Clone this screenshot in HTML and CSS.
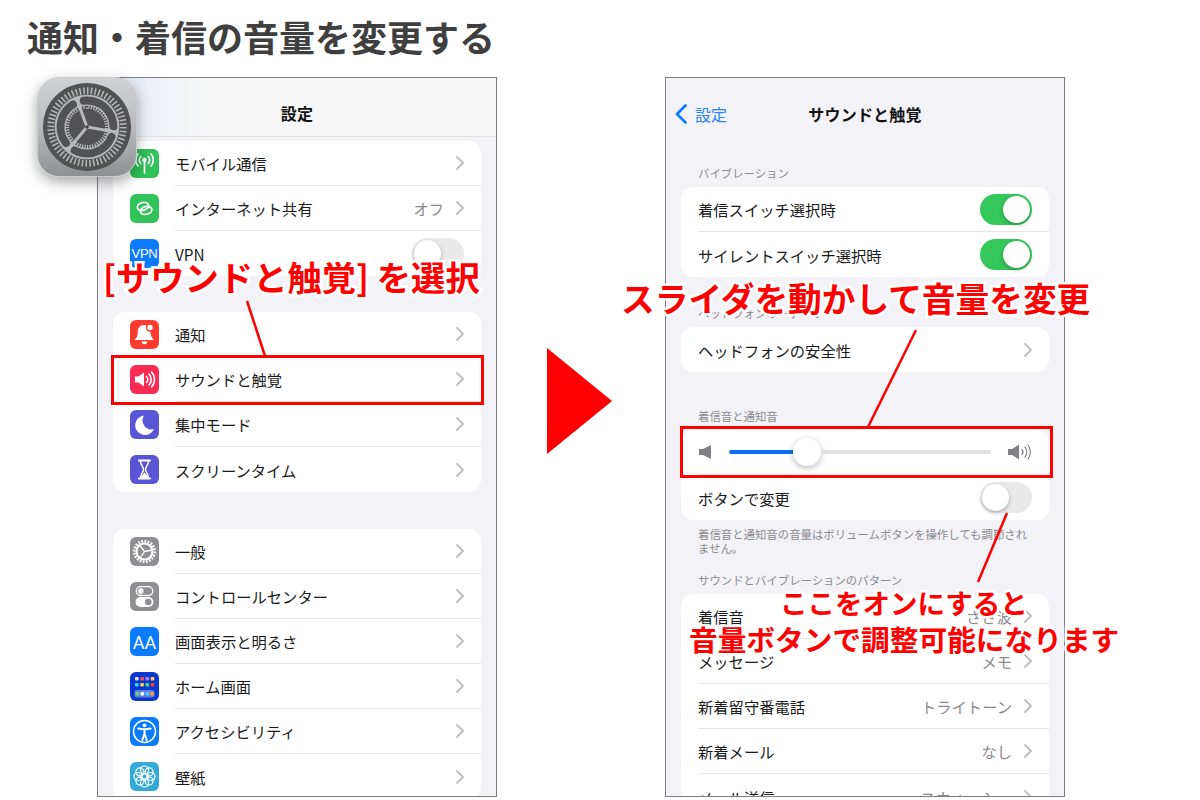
FILE: index.html
```html
<!DOCTYPE html>
<html lang="ja">
<head>
<meta charset="utf-8">
<title>通知・着信の音量を変更する</title>
<link rel="stylesheet" href="styles.css">
</head>
<body>
<svg class="defs" aria-hidden="true"><symbol id="chev" viewBox="0 0 8 14"><path d="M1 1l6 6-6 6" fill="none" stroke="#bdbdc2" stroke-width="1.8" stroke-linecap="round" stroke-linejoin="round"/></symbol></svg>
<div class="page">
  <h1 class="title">通知・着信の音量を変更する</h1>
  <div class="stage">
    <section class="phone">
      <header class="nav nav-blur"><span></span><span class="nav-title">設定</span><span></span></header>
      <div class="list-left">
        <div class="card">
          <div class="row"><span class="ico i-green"><svg viewBox="0 0 29 29"><circle cx="14.5" cy="11" r="2.2" fill="#fff"/><path d="M14.5 11v13M18.2 7.5a5 5 0 0 1 0 7M10.8 7.5a5 5 0 0 0 0 7M21 5a9 9 0 0 1 0 12M8 5a9 9 0 0 0 0 12" fill="none" stroke="#fff" stroke-width="1.7" stroke-linecap="round"/></svg></span><div class="body"><span class="label">モバイル通信</span><svg class="chev"><use href="#chev"/></svg></div></div>
          <div class="row"><span class="ico i-green"><svg viewBox="0 0 29 29"><g fill="none" stroke="#fff" stroke-width="1.800"><ellipse cx="13" cy="12.400" rx="5.800" ry="3.800" transform="rotate(-15 13 12.400)"/><ellipse cx="16.200" cy="16.400" rx="5.800" ry="3.800" transform="rotate(-15 16.200 16.400)"/></g></svg></span><div class="body"><span class="label">インターネット共有</span><span class="value">オフ</span><svg class="chev"><use href="#chev"/></svg></div></div>
          <div class="row"><span class="ico i-blue txt-vpn">VPN</span><div class="body"><span class="label">VPN</span><span class="toggle off"><i></i></span></div></div>
        </div>
        <div class="card">
          <div class="row"><span class="ico i-red"><svg viewBox="0 0 29 29"><path d="M14 5c-4 0-6.200 3-6.200 7 0 4-1.300 6-3.300 8h19.500c-2-2-3.500-4-3.500-8 0-4-2.500-7-6.500-7z" fill="#fff"/><path d="M11.800 21.500a2.700 2.700 0 0 0 5.400 0z" fill="#fff"/><circle cx="20" cy="7.500" r="3.400" fill="#fff" stroke="#ff3b30" stroke-width="1.500"/></svg></span><div class="body"><span class="label">通知</span><svg class="chev"><use href="#chev"/></svg></div></div>
          <div class="row"><span class="ico i-pink"><svg viewBox="0 0 29 29"><path d="M5 11.500h3.500L14 7.500v14l-5.500-4H5z" fill="#fff"/><path d="M16.500 11.500a4 4 0 0 1 0 6M19 9a8 8 0 0 1 0 11M21.500 7a11 11 0 0 1 0 15" fill="none" stroke="#fff" stroke-width="1.600" stroke-linecap="round"/></svg></span><div class="body"><span class="label">サウンドと触覚</span><svg class="chev"><use href="#chev"/></svg></div></div>
          <div class="row"><span class="ico i-indigo"><svg viewBox="0 0 29 29"><path d="M14 5.500a9.800 9.800 0 1 0 10 13.500 A 9 9 0 0 1 14 5.500z" fill="#fff"/></svg></span><div class="body"><span class="label">集中モード</span><svg class="chev"><use href="#chev"/></svg></div></div>
          <div class="row"><span class="ico i-indigo"><svg viewBox="0 0 29 29"><path d="M9 5.500h11M9 23.500h11" stroke="#fff" stroke-width="2.200" stroke-linecap="round"/><path d="M10.500 6c0 4.500 3 5.500 3 8.500s-3 4-3 8.500h8c0-4.500-3-5.500-3-8.500s3-4 3-8.500" fill="none" stroke="#fff" stroke-width="1.500"/><path d="M11 22.500c.5-2.500 2.500-3.500 3.500-5 1 1.500 3 2.500 3.500 5z" fill="#fff"/></svg></span><div class="body"><span class="label">スクリーンタイム</span><svg class="chev"><use href="#chev"/></svg></div></div>
        </div>
        <div class="card card-low">
          <div class="row"><span class="ico i-gray"><svg viewBox="0 0 29 29"><g fill="none" stroke="#fff"><circle cx="14.500" cy="14.500" r="10.300" stroke-width="2.600" pathLength="20" stroke-dasharray=".55 .45"/><circle cx="14.500" cy="14.500" r="8" stroke-width="2.200"/><path d="M14.500 14.500l8-1.500M14.500 14.500l-5-6.500M14.500 14.500l-4.500 6.800" stroke-width="1.300"/></g></svg></span><div class="body"><span class="label">一般</span><svg class="chev"><use href="#chev"/></svg></div></div>
          <div class="row"><span class="ico i-gray"><svg viewBox="0 0 29 29"><rect x="6.200" y="4.700" width="16.600" height="8.800" rx="4.400" fill="none" stroke="#fff" stroke-width="1.300"/><circle cx="10.800" cy="9.100" r="2.800" fill="#fff"/><rect x="5.500" y="15" width="18" height="10" rx="5" fill="#fff"/><circle cx="18.300" cy="20" r="3.300" fill="#8e8e93"/></svg></span><div class="body"><span class="label">コントロールセンター</span><svg class="chev"><use href="#chev"/></svg></div></div>
          <div class="row"><span class="ico i-blue txt-aa">AA</span><div class="body"><span class="label">画面表示と明るさ</span><svg class="chev"><use href="#chev"/></svg></div></div>
          <div class="row"><span class="ico i-navy"><svg viewBox="0 0 29 29"><rect x="4.500" y="18" width="20" height="7.500" rx="2" fill="#5c7fe0"/><g><rect x="5" y="5" width="3.600" height="3.600" rx="1" fill="#dfe6ff"/><rect x="10.300" y="5" width="3.600" height="3.600" rx="1" fill="#ff4d4d"/><rect x="15.500" y="5" width="3.600" height="3.600" rx="1" fill="#b57cff"/><rect x="20.700" y="5" width="3.600" height="3.600" rx="1" fill="#ffd23c"/><rect x="5" y="11" width="3.600" height="3.600" rx="1" fill="#39d2f0"/><rect x="10.300" y="11" width="3.600" height="3.600" rx="1" fill="#ffd23c"/><rect x="15.500" y="11" width="3.600" height="3.600" rx="1" fill="#3ddc6a"/><rect x="20.700" y="11" width="3.600" height="3.600" rx="1" fill="#ff3b30"/><rect x="5.500" y="20" width="3.600" height="3.600" rx="1" fill="#5be35b"/><rect x="10.500" y="20" width="3.600" height="3.600" rx="1" fill="#fff"/><rect x="15.500" y="20" width="3.600" height="3.600" rx="1" fill="#4cc8ff"/><rect x="20.300" y="20" width="3.600" height="3.600" rx="1" fill="#ff9f2e"/></g></svg></span><div class="body"><span class="label">ホーム画面</span><svg class="chev"><use href="#chev"/></svg></div></div>
          <div class="row"><span class="ico i-blue"><svg viewBox="0 0 29 29"><circle cx="14.500" cy="14.500" r="11" fill="none" stroke="#fff" stroke-width="1.500"/><circle cx="14.500" cy="8.300" r="1.900" fill="#fff"/><path d="M8.300 11.500c4 1 8.400 1 12.400 0M14.500 12.500v4.500M14.500 16.500l-2.200 6.500M14.500 16.500l2.200 6.500" fill="none" stroke="#fff" stroke-width="2" stroke-linecap="round"/></svg></span><div class="body"><span class="label">アクセシビリティ</span><svg class="chev"><use href="#chev"/></svg></div></div>
          <div class="row"><span class="ico i-sky"><svg viewBox="0 0 29 29"><g fill="none" stroke="#fff" stroke-width="1.200"><circle cx="14.500" cy="8" r="4"/><circle cx="19.100" cy="9.900" r="4"/><circle cx="21" cy="14.500" r="4"/><circle cx="19.100" cy="19.100" r="4"/><circle cx="14.500" cy="21" r="4"/><circle cx="9.900" cy="19.100" r="4"/><circle cx="8" cy="14.500" r="4"/><circle cx="9.900" cy="9.900" r="4"/><circle cx="14.500" cy="14.500" r="3.500"/></g></svg></span><div class="body"><span class="label">壁紙</span><svg class="chev"><use href="#chev"/></svg></div></div>
        </div>
      </div>
    </section>

    <svg class="arrow" viewBox="0 0 65 106"><path d="M0 0l65 53L0 106z" fill="#f00"/></svg>

    <section class="phone">
      <header class="nav"><span class="back"><svg class="back-chev" viewBox="0 0 12 20"><path d="M10.500 1.500L2 10l8.500 8.500" fill="none" stroke="#0a7aff" stroke-width="2.600" stroke-linecap="round" stroke-linejoin="round"/></svg>設定</span><span class="nav-title">サウンドと触覚</span><span></span></header>
      <div class="list-right">
        <h2 class="sec-head s-a">バイブレーション</h2>
        <div class="card">
          <div class="row"><div class="body"><span class="label">着信スイッチ選択時</span><span class="toggle on"><i></i></span></div></div>
          <div class="row"><div class="body"><span class="label">サイレントスイッチ選択時</span><span class="toggle on"><i></i></span></div></div>
        </div>
        <h2 class="sec-head s-a">ヘッドフォンオーディオ</h2>
        <div class="card">
          <div class="row"><div class="body"><span class="label">ヘッドフォンの安全性</span><svg class="chev"><use href="#chev"/></svg></div></div>
        </div>
        <h2 class="sec-head s-b">着信音と通知音</h2>
        <div class="card">
          <div class="row"><div class="body slider-row">
            <svg class="spk-s" viewBox="0 0 12 14"><path d="M0 4h4l8-4v14l-8-4H0z" fill="#808085"/></svg>
            <div class="slider"><i class="fill"></i><i class="knob"></i><i class="rest"></i></div>
            <svg class="spk-l" viewBox="0 0 24 16"><path d="M0 5h4l7-4.500v15L4 11H0z" fill="#808085"/><path d="M14 5.500a4 4 0 0 1 0 5M17 3a8 8 0 0 1 0 10M20 1a11.500 11.500 0 0 1 0 14" fill="none" stroke="#808085" stroke-width="1.200" stroke-linecap="round"/></svg>
          </div></div>
          <div class="row"><div class="body"><span class="label">ボタンで変更</span><span class="toggle off"><i></i></span></div></div>
        </div>
        <p class="foot">着信音と通知音の音量はボリュームボタンを操作しても調節されません。</p>
        <h2 class="sec-head s-c">サウンドとバイブレーションのパターン</h2>
        <div class="card">
          <div class="row"><div class="body"><span class="label">着信音</span><span class="value">さざ波</span><svg class="chev"><use href="#chev"/></svg></div></div>
          <div class="row"><div class="body"><span class="label">メッセージ</span><span class="value">メモ</span><svg class="chev"><use href="#chev"/></svg></div></div>
          <div class="row"><div class="body"><span class="label">新着留守番電話</span><span class="value">トライトーン</span><svg class="chev"><use href="#chev"/></svg></div></div>
          <div class="row"><div class="body"><span class="label">新着メール</span><span class="value">なし</span><svg class="chev"><use href="#chev"/></svg></div></div>
          <div class="row"><div class="body"><span class="label">メール送信</span><span class="value">スウォッシュ</span><svg class="chev"><use href="#chev"/></svg></div></div>
        </div>
      </div>
    </section>
  </div>

  <div class="app-icon">
    <svg viewBox="0 0 100 100">
      <circle cx="50" cy="50" r="45" fill="#525254"/>
      <g fill="none">
        <circle cx="50" cy="50" r="37" stroke="#b7b9bb" stroke-width="7" pathLength="60" stroke-dasharray=".4 .6"/>
        <circle cx="50" cy="50" r="33" fill="#b7b9bb" stroke="none"/>
        <circle cx="50" cy="50" r="27" stroke="#525254" stroke-width="8" stroke-linecap="round" pathLength="360" stroke-dasharray="96 24" transform="rotate(22 50 50)"/>
        <circle cx="50" cy="50" r="20" stroke="#525254" stroke-width="3.500" pathLength="48" stroke-dasharray=".5 .5"/>
        <circle cx="50" cy="50" r="18.500" fill="#525254" stroke="none"/>
        <path d="M50 50l32 5.500M50 50L29 75M50 50L39 20" stroke="#b7b9bb" stroke-width="3"/>
      </g>
      <circle cx="50" cy="50" r="1.800" fill="#3e3e40"/>
    </svg>
  </div>

  <div class="mark mark-left"></div>
  <div class="mark mark-right"></div>
  <svg class="leaders" viewBox="0 0 1200 800"><path d="M247 301l18 55M916 330l-48 97M1007 513l-29 69" fill="none" stroke="#f00" stroke-width="2.500"/></svg>

  <p class="note n-1">[サウンドと触覚] を選択</p>
  <p class="note n-2">スライダを動かして音量を変更</p>
  <p class="note n-3">ここをオンにすると</p>
  <p class="note n-4">音量ボタンで調整可能になります</p>
</div>
</body>
</html>
```
FILE: styles.css
```css
* { box-sizing: border-box; }
html, body { margin: 0; padding: 0; background: #fff; }
body { font-family: "Noto Sans CJK JP", "Noto Sans", sans-serif; color: #111; }
.defs { display: none; }
.page { position: relative; width: 1200px; height: 800px; overflow: hidden; }
.title { margin: 0; height: 77px; padding-left: 27px; font-size: 36px; line-height: 73px; font-weight: 700; color: #3f3f3f; white-space: nowrap; }
.stage { display: flex; align-items: flex-start; padding-left: 97px; }
.phone { flex: 0 0 400px; height: 720px; border: 1px solid #7f7f7f; background: #f2f2f7; overflow: hidden; }
.arrow { flex: 0 0 65px; width: 65px; height: 106px; margin: 271px 53px 0 50px; }
.nav { height: 59px; padding-top: 12px; display: grid; grid-template-columns: 1fr auto 1fr; align-items: center; }
.nav-blur { background: linear-gradient(90deg, #dfe9f6 0, #e8eef6 35px, #f7f7f7 110px); border-bottom: 1px solid #e2e2e4; }
.nav-title { font-size: 16px; font-weight: 700; letter-spacing: .2px; color: #111; }
.back { display: flex; align-items: center; padding-left: 9px; gap: 8px; font-size: 16px; color: #2b85f2; }
.back-chev { width: 12px; height: 20px; }
.list-left { padding: 4px 15px 0; display: flex; flex-direction: column; gap: 36px; }
.list-right { padding: 0 15px; }
.card { background: #fff; border-radius: 12px; overflow: hidden; }
.card-low { margin-top: 1px; }
.row { height: 45px; display: flex; align-items: center; padding-left: 17px; }
.row:last-child .body { border-bottom: 0; }
.body { flex: 1; min-width: 0; height: 100%; display: flex; align-items: center; padding-right: 17px; border-bottom: 1px solid #e6e6ea; }
.label { flex: 1; font-size: 15.300px; white-space: nowrap; color: #1a1a1a; }
.value { font-size: 15.300px; color: #8a8a8e; margin-right: 12px; }
.chev { width: 8px; height: 14px; flex: none; }
.ico { flex: none; width: 29px; height: 29px; margin-right: 16px; border-radius: 6px; display: flex; align-items: center; justify-content: center; color: #fff; }
.ico svg { width: 29px; height: 29px; display: block; }
.i-green { background: #31c25a; }
.i-blue { background: #0a7aff; }
.i-red { background: #ff3b30; }
.i-pink { background: #fb2b55; }
.i-indigo { background: #5856d6; }
.i-gray { background: #8e8e93; }
.i-navy { background: #0a37cf; }
.i-sky { background: #33a9d8; }
.txt-vpn { font-family: "Liberation Sans", sans-serif; font-size: 13px; letter-spacing: -.3px; }
.txt-aa { font-family: Roboto, sans-serif; font-size: 18px; padding-top: 1px; }
.toggle { flex: none; width: 52px; height: 31px; border-radius: 16px; padding: 2px; display: flex; }
.toggle i { width: 27px; height: 27px; border-radius: 50%; background: #fff; box-shadow: 0 2px 4px rgba(0, 0, 0, .25); }
.toggle.on { background: #34c759; justify-content: flex-end; }
.toggle.off { background: #e9e9ea; }
.sec-head { margin: 29px 0 7px 17px; height: 14px; font-size: 11.400px; line-height: 14px; font-weight: 400; color: #8a8a8e; white-space: nowrap; }
.s-b { margin-top: 37px; }
.s-c { margin-top: 18px; }
.foot { margin: 7px 17px 0; font-size: 11.400px; line-height: 14px; color: #8a8a8e; height: 28px; }
.slider-row { padding-right: 17px; }
.spk-s { flex: none; width: 12px; height: 14px; margin: 0 18px 0 1px; }
.spk-l { flex: none; width: 24px; height: 16px; margin-left: 17px; }
.slider { flex: 1; height: 28px; display: flex; align-items: center; }
.fill { flex: 0 0 64px; height: 4px; background: #0a6ff0; border-radius: 2px 0 0 2px; }
.knob { flex: 0 0 28px; height: 28px; border-radius: 50%; background: #fff; box-shadow: 0 2px 6px rgba(0, 0, 0, .28); }
.rest { flex: 1; height: 4px; background: #e0e0e3; border-radius: 0 2px 2px 0; }
.app-icon { position: absolute; left: 37px; top: 77px; width: 100px; height: 100px; border-radius: 22px; background: linear-gradient(180deg, #cfd1d4 0, #b9bbbe 50%, #8e9093 100%); box-shadow: 0 5px 14px rgba(0, 0, 0, .35); border: 1px solid #c9cbcd; }
.app-icon svg { display: block; width: 98px; height: 98px; }
.mark { position: absolute; border: 3px solid #f00; }
.mark-left { left: 111px; top: 355px; width: 373px; height: 50px; }
.mark-right { left: 680px; top: 426px; width: 373px; height: 52px; }
.leaders { position: absolute; left: 0; top: 0; width: 1200px; height: 800px; }
.note { position: absolute; margin: 0; white-space: nowrap; color: #f00; font-weight: 700; line-height: 40px; -webkit-text-stroke: 5px #fff; paint-order: stroke fill; }
.n-1 { left: 103px; top: 256px; font-size: 34.300px; }
.n-2 { left: 621px; top: 278px; font-size: 33.700px; }
.n-3 { left: 780px; top: 582px; font-size: 27.500px; }
.n-4 { left: 689px; top: 619px; font-size: 28.700px; }
```
